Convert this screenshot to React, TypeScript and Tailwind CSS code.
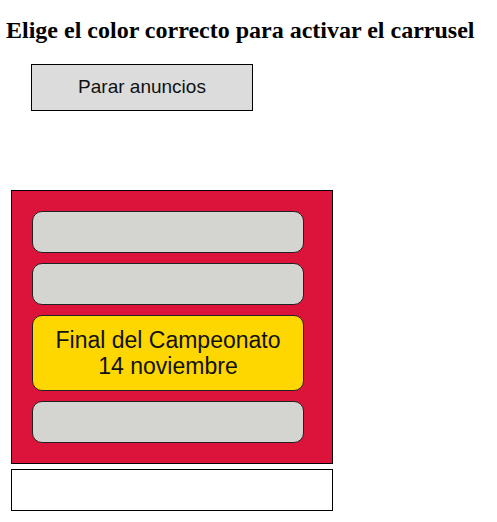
export default function App() {
  const slides = [
    { id: 1, lines: [] as string[], active: false },
    { id: 2, lines: [] as string[], active: false },
    { id: 3, lines: ['Final del Campeonato', '14 noviembre'], active: true },
    { id: 4, lines: [] as string[], active: false },
  ]

  return (
    <div className="bg-white min-h-[522px] font-['Liberation_Sans',Arial,sans-serif]">
      {/* Title */}
      <h1 className="pt-[16px] pl-[6px] font-['Liberation_Serif','Times_New_Roman',serif] text-[24px] font-bold leading-[28px] text-black whitespace-nowrap">
        Elige el color correcto para activar el carrusel
      </h1>

      <button className="ml-[31px] mt-[20px] w-[222px] h-[47px] bg-[#dcdcdc] border border-black text-[19px] text-[#111]">
        Parar anuncios
      </button>

      {/* Carousel */}
      <div className="ml-[11px] mt-[79px] w-[322px]">
        <div className="h-[274px] bg-[#dc143c] border border-black p-[20px] flex flex-col gap-[10px]">
          {slides.map((s) => (
            <div
              key={s.id}
              className={
                s.active
                  ? 'w-[272px] h-[76px] rounded-[10px] border border-[#222] bg-[#ffd700] flex flex-col items-center justify-center text-[23px] leading-[26px] text-[#111]'
                  : 'w-[272px] h-[42px] rounded-[10px] border border-[#222] bg-[#d4d4d0]'
              }
            >
              {s.lines.map((l) => (
                <span key={l}>{l}</span>
              ))}
            </div>
          ))}
        </div>
        <div className="mt-[5px] h-[42px] bg-white border border-black" />
      </div>
    </div>
  )
}
